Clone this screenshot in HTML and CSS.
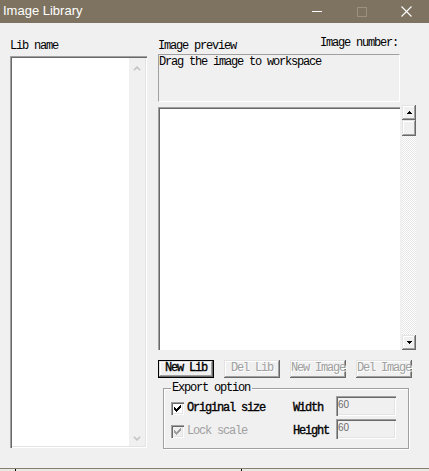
FILE: index.html
```html
<!DOCTYPE html>
<html lang="en">
<head>
<meta charset="utf-8">
<title>Image Library</title>
<link rel="stylesheet" href="styles.css">
</head>
<body>
<div class="window">
  <div class="titlebar">
    <span class="title">Image Library</span>
    <div class="caption-buttons">
      <span class="cap-btn">
        <svg width="10" height="1" viewBox="0 0 10 1"><rect x="0" y="0" width="10" height="1" fill="#fff"/></svg>
      </span>
      <span class="cap-btn">
        <svg width="10" height="10" viewBox="0 0 10 10"><rect x="0.5" y="0.5" width="9" height="9" fill="none" stroke="#9b917f"/></svg>
      </span>
      <span class="cap-btn">
        <svg width="11" height="11" viewBox="0 0 11 11"><path d="M0.5 0.5 L10.5 10.5 M10.5 0.5 L0.5 10.5" stroke="#fff" stroke-width="1.1" fill="none"/></svg>
      </span>
    </div>
  </div>

  <div class="client">
    <div class="lib-col">
      <div class="label">Lib name</div>
      <div class="listbox">
        <div class="list-area"></div>
        <div class="flat-scroll">
          <svg width="8" height="5" viewBox="0 0 8 5"><path d="M0.8 4.3 L4 1.2 L7.2 4.3" stroke="#c3c3c3" stroke-width="1.6" fill="none"/></svg>
          <svg width="8" height="5" viewBox="0 0 8 5"><path d="M0.8 0.7 L4 3.8 L7.2 0.7" stroke="#c3c3c3" stroke-width="1.6" fill="none"/></svg>
        </div>
      </div>
    </div>

    <div class="main-col">
      <div class="header-row">
        <span class="label">Image preview</span>
        <span class="label count">Image number:</span>
      </div>
      <div class="preview-box">Drag the image to workspace</div>

      <div class="canvas-row">
        <div class="canvas"></div>
        <div class="vscroll">
          <div class="sb-btn">
            <svg width="5" height="3" viewBox="0 0 5 3" shape-rendering="crispEdges"><rect x="2" y="0" width="1" height="1"/><rect x="1" y="1" width="3" height="1"/><rect x="0" y="2" width="5" height="1"/></svg>
          </div>
          <div class="sb-thumb"></div>
          <div class="sb-track"></div>
          <div class="sb-btn">
            <svg width="5" height="3" viewBox="0 0 5 3" shape-rendering="crispEdges"><rect x="0" y="0" width="5" height="1"/><rect x="1" y="1" width="3" height="1"/><rect x="2" y="2" width="1" height="1"/></svg>
          </div>
        </div>
      </div>

      <div class="button-row">
        <button class="btn default">New Lib</button>
        <button class="btn" disabled>Del Lib</button>
        <button class="btn" disabled>New Image</button>
        <button class="btn" disabled>Del Image</button>
      </div>

      <div class="groupbox">
        <span class="legend">Export option</span>
        <div class="opt-grid">
          <label class="check strong">
            <span class="box">
              <svg width="7" height="7" viewBox="0 0 7 7" shape-rendering="crispEdges"><path d="M6 0h1v3h-1zM5 1h1v3h-1zM4 2h1v3h-1zM3 3h1v3h-1zM2 4h1v3h-1zM1 3h1v3h-1zM0 2h1v3h-1z" fill="#000"/></svg>
            </span>Original size</label>
          <span class="field-label strong">Width</span>
          <span class="field">60</span>

          <label class="check disabled">
            <span class="box">
              <svg width="7" height="7" viewBox="0 0 7 7" shape-rendering="crispEdges"><path d="M6 0h1v3h-1zM5 1h1v3h-1zM4 2h1v3h-1zM3 3h1v3h-1zM2 4h1v3h-1zM1 3h1v3h-1zM0 2h1v3h-1z" fill="#a0a0a0"/></svg>
            </span>Lock scale</label>
          <span class="field-label strong">Height</span>
          <span class="field">60</span>
        </div>
      </div>
    </div>
  </div>

  <div class="footer"><span class="seg"></span></div>
</div>
</body>
</html>
```

FILE: styles.css
```css
* {
  box-sizing: border-box;
}

html,
body {
  margin: 0;
  padding: 0;
}

body {
  width: 429px;
  height: 471px;
  overflow: hidden;
  background: #f0f0f0;
  color: #000;
  font-family: "Liberation Mono", "Courier New", monospace;
  font-size: 12px;
  letter-spacing: -1.2px;
}

.window {
  display: flex;
  flex-direction: column;
  height: 471px;
}

/* caption bar */
.titlebar {
  flex: none;
  height: 23px;
  display: flex;
  background: #7e7360;
}

.title {
  flex: 1;
  padding-left: 3px;
  color: #fff;
  font-family: "Liberation Sans", Arial, sans-serif;
  font-size: 13px;
  letter-spacing: 0;
  line-height: 21px;
}

.caption-buttons {
  display: flex;
}

.cap-btn {
  width: 45px;
  display: flex;
  align-items: center;
  justify-content: center;
}

/* dialog body */
.client {
  flex: 1;
  display: flex;
  gap: 11px;
  padding: 16px 0 0 10px;
}

.label {
  height: 14px;
  line-height: 14px;
  white-space: pre;
}

.lib-col {
  width: 137px;
  display: flex;
  flex-direction: column;
}

.lib-col .label {
  margin-bottom: 3px;
}

.listbox {
  height: 392px;
  display: flex;
  padding: 2px;
  box-shadow: inset 1px 1px #a0a0a0, inset 2px 2px #696969,
    inset -1px -1px #fff, inset -2px -2px #e3e3e3;
}

.list-area {
  flex: 1;
  background: #fff;
}

.flat-scroll {
  width: 16px;
  display: flex;
  flex-direction: column;
  justify-content: space-between;
  align-items: center;
  padding: 8px 0 5px;
  background: #f0f0f0;
}

.main-col {
  width: 258px;
  display: flex;
  flex-direction: column;
}

.header-row {
  display: flex;
  justify-content: space-between;
  height: 14px;
}

.count {
  margin-top: -3px;
  margin-right: 18px;
}

.preview-box {
  width: 242px;
  height: 48px;
  margin-top: 1px;
  line-height: 14px;
  white-space: pre;
  border-top: 1px solid #a0a0a0;
  border-left: 1px solid #a0a0a0;
  border-right: 1px solid #fff;
  border-bottom: 1px solid #fff;
}

.canvas-row {
  display: flex;
  gap: 2px;
  height: 245px;
  margin-top: 3px;
}

.canvas {
  width: 242px;
  height: 243px;
  margin-top: 2px;
  background: #fff;
  box-shadow: inset 1px 1px #a0a0a0, inset 2px 2px #696969;
}

/* classic 3D scroll bar */
.vscroll {
  width: 14px;
  display: flex;
  flex-direction: column;
}

.sb-btn,
.sb-thumb,
.btn {
  background: #f0f0f0;
  box-shadow: inset -1px -1px #696969, inset 1px 1px #e3e3e3,
    inset -2px -2px #a0a0a0, inset 2px 2px #fff;
}

.sb-btn {
  flex: none;
  height: 15px;
  display: flex;
  align-items: center;
  justify-content: center;
}

.sb-thumb {
  flex: none;
  height: 16px;
}

.sb-track {
  flex: 1;
  background: repeating-conic-gradient(#fff 0 25%, #e6e6e6 0 50%) 0 0 / 2px 2px;
}

/* push buttons */
.button-row {
  display: flex;
  gap: 10px;
  margin-top: 10px;
}

.btn {
  width: 56px;
  height: 18px;
  padding: 0 0 1px;
  border: none;
  font: inherit;
  letter-spacing: inherit;
  line-height: 17px;
  color: #000;
  white-space: pre;
}

.btn.default {
  border: 1px solid #000;
  line-height: 15px;
  -webkit-text-stroke: 0.35px #000;
}

.btn:disabled {
  color: #a0a0a0;
  text-shadow: 1px 1px #fff;
}

/* export options */
.groupbox {
  position: relative;
  width: 246px;
  height: 61px;
  margin: 10px 0 0 5px;
  padding: 7px 12px 0 7px;
  border: 1px solid #a0a0a0;
  box-shadow: inset 1px 1px #fff, 1px 1px #fff;
}

.legend {
  position: absolute;
  left: 7px;
  top: -8px;
  padding: 0 2px 0 1px;
  background: #f0f0f0;
  line-height: 14px;
  white-space: pre;
}

.opt-grid {
  display: grid;
  grid-template-columns: 1fr auto 60px;
  grid-template-rows: 20px 20px;
  row-gap: 3px;
  column-gap: 7px;
}

.strong {
  -webkit-text-stroke: 0.35px #000;
}

.check,
.field-label {
  align-self: end;
  height: 14px;
  margin-bottom: 1px;
  line-height: 14px;
  white-space: pre;
}

.check {
  display: flex;
  align-items: center;
  gap: 3px;
}

.check .box {
  flex: none;
  width: 13px;
  height: 13px;
  display: flex;
  align-items: center;
  justify-content: center;
  background: #fff;
  box-shadow: inset 1px 1px #a0a0a0, inset 2px 2px #696969,
    inset -1px -1px #fff, inset -2px -2px #e3e3e3;
}

.check.disabled {
  color: #a0a0a0;
}

.check.disabled .box {
  background: #f0f0f0;
}

.field {
  height: 20px;
  padding: 3px 0 0 2px;
  background: #f0f0f0;
  color: #6d6d6d;
  font-family: "Liberation Sans", Arial, sans-serif;
  font-size: 10px;
  letter-spacing: 0;
  line-height: 11px;
  box-shadow: inset 1px 1px #a0a0a0, inset 2px 2px #696969,
    inset -1px -1px #fff, inset -2px -2px #e3e3e3;
}

/* window frame strip along the bottom */
.footer {
  flex: none;
  height: 3px;
  display: flex;
  padding-left: 15px;
  border-top: 1px solid #887e6b;
  background: #e9e9e9;
}

.seg {
  width: 227px;
  border-left: 1px solid #000;
  border-right: 1px solid #000;
}
```
